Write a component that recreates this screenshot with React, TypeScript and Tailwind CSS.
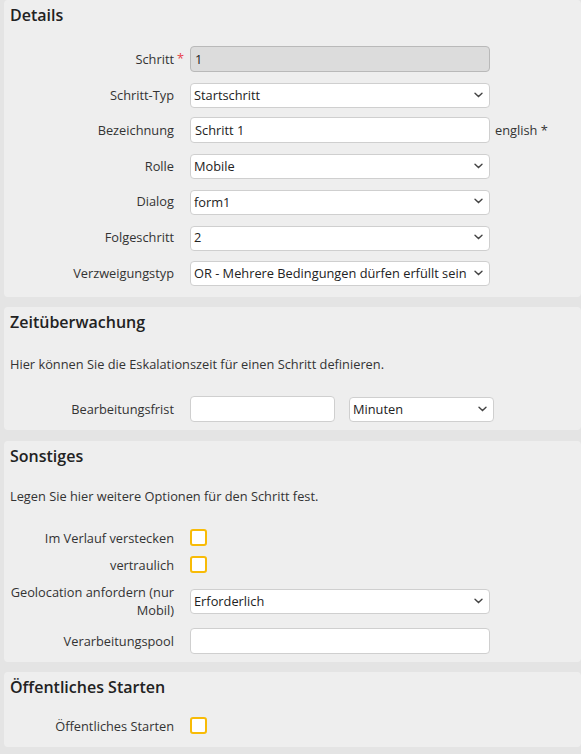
import React from "react"

const font = { fontFamily: '"Open Sans", "Liberation Sans", sans-serif' }

function Chevron() {
  return (
    <svg width="9" height="6" viewBox="0 0 9 6" className="pointer-events-none absolute right-[7px] top-1/2 -translate-y-1/2">
      <path d="M1 1.2l3.5 3.4L8 1.2" stroke="#444" strokeWidth="1.4" fill="none" strokeLinecap="round" />
    </svg>
  )
}

function Select({ value, width = "w-[300px]" }: { value: string; width?: string }) {
  return (
    <div className={`relative h-[25px] ${width}`}>
      <select
        defaultValue={value}
        className="h-full w-full appearance-none rounded-[4px] border border-[#cfcfcf] bg-white pl-[3px] pr-5 text-[12.8px] text-[#222] outline-none"
      >
        <option>{value}</option>
      </select>
      <Chevron />
    </div>
  )
}

function TextInput({ value = "", width = "w-[300px]", disabled = false }: { value?: string; width?: string; disabled?: boolean }) {
  return (
    <input
      readOnly
      defaultValue={value}
      className={`h-[26px] ${width} rounded-[4px] border px-[4px] text-[12.8px] text-[#222] outline-none ${
        disabled ? "border-[#b9b9b9] bg-[#dcdcdc]" : "border-[#cfcfcf] bg-white"
      }`}
    />
  )
}

function Checkbox() {
  return <div className="h-[17px] w-[17px] rounded-[3px] border-2 border-[#f8bb07] bg-white" />
}

function Row({ label, children, required, h = "h-[26px]" }: { label: React.ReactNode; children: React.ReactNode; required?: boolean; h?: string }) {
  return (
    <div className={`grid grid-cols-[164px_auto] items-center gap-x-4 ${h}`}>
      <div className="relative whitespace-nowrap text-right text-[12.8px] leading-[18px] text-[#333]">
        {label}
        {required && <span className="absolute -right-[10px] top-[-1px] text-[#e8444c]">*</span>}
      </div>
      <div className="flex items-center">{children}</div>
    </div>
  )
}

function Panel({ title, children, className = "" }: { title: string; children: React.ReactNode; className?: string }) {
  return (
    <section className={`ml-1 rounded-[4px] bg-[#eeeeee] pl-[6px] pt-[4px] ${className}`}>
      <h2 className="text-[16px] font-semibold leading-[22px] text-[#222]">{title}</h2>
      {children}
    </section>
  )
}

export default function App() {
  return (
    <div className="min-h-[754px] bg-[#e4e4e4]" style={font}>
      <Panel title="Details" className="pb-[11px]">
        <div className="mt-[20px] flex flex-col gap-[9.6px]">
          <Row label="Schritt" required>
            <TextInput value="1" disabled />
          </Row>
          <Row label="Schritt-Typ">
            <Select value="Startschritt" />
          </Row>
          <Row label="Bezeichnung">
            <TextInput value="Schritt 1" />
            <span className="ml-[5px] text-[12.8px] text-[#333]">english *</span>
          </Row>
          <Row label="Rolle">
            <Select value="Mobile" />
          </Row>
          <Row label="Dialog">
            <Select value="form1" />
          </Row>
          <Row label="Folgeschritt">
            <Select value="2" />
          </Row>
          <Row label="Verzweigungstyp">
            <Select value="OR - Mehrere Bedingungen dürfen erfüllt sein" />
          </Row>
        </div>
      </Panel>

      <Panel title="Zeitüberwachung" className="mt-[10px] pb-[8px]">
        <p className="mt-[22px] text-[12.8px] leading-[18px] text-[#333]">
          Hier können Sie die Eskalationszeit für einen Schritt definieren.
        </p>
        <div className="mt-[23px]">
          <Row label="Bearbeitungsfrist">
            <div className="flex items-center gap-[14px]">
              <TextInput width="w-[145px]" />
              <Select value="Minuten" width="w-[145px]" />
            </div>
          </Row>
        </div>
      </Panel>

      <Panel title="Sonstiges" className="mt-[11px] pb-[8px]">
        <p className="mt-[20px] text-[12.8px] leading-[18px] text-[#333]">
          Legen Sie hier weitere Optionen für den Schritt fest.
        </p>
        <div className="mt-[24px] flex flex-col gap-[9px]">
          <Row label="Im Verlauf verstecken" h="h-[18px]">
            <Checkbox />
          </Row>
          <Row label="vertraulich" h="h-[18px]">
            <Checkbox />
          </Row>
          <Row
            h="h-[36px]"
            label={
              <>
                Geolocation anfordern (nur
                <br />
                Mobil)
              </>
            }
          >
            <Select value="Erforderlich" />
          </Row>
          <Row label="Verarbeitungspool">
            <TextInput />
          </Row>
        </div>
      </Panel>

      <Panel title="Öffentliches Starten" className="mt-[10px] pb-[8px]">
        <div className="mt-[15px]">
          <Row label="Öffentliches Starten">
            <Checkbox />
          </Row>
        </div>
      </Panel>
    </div>
  )
}
